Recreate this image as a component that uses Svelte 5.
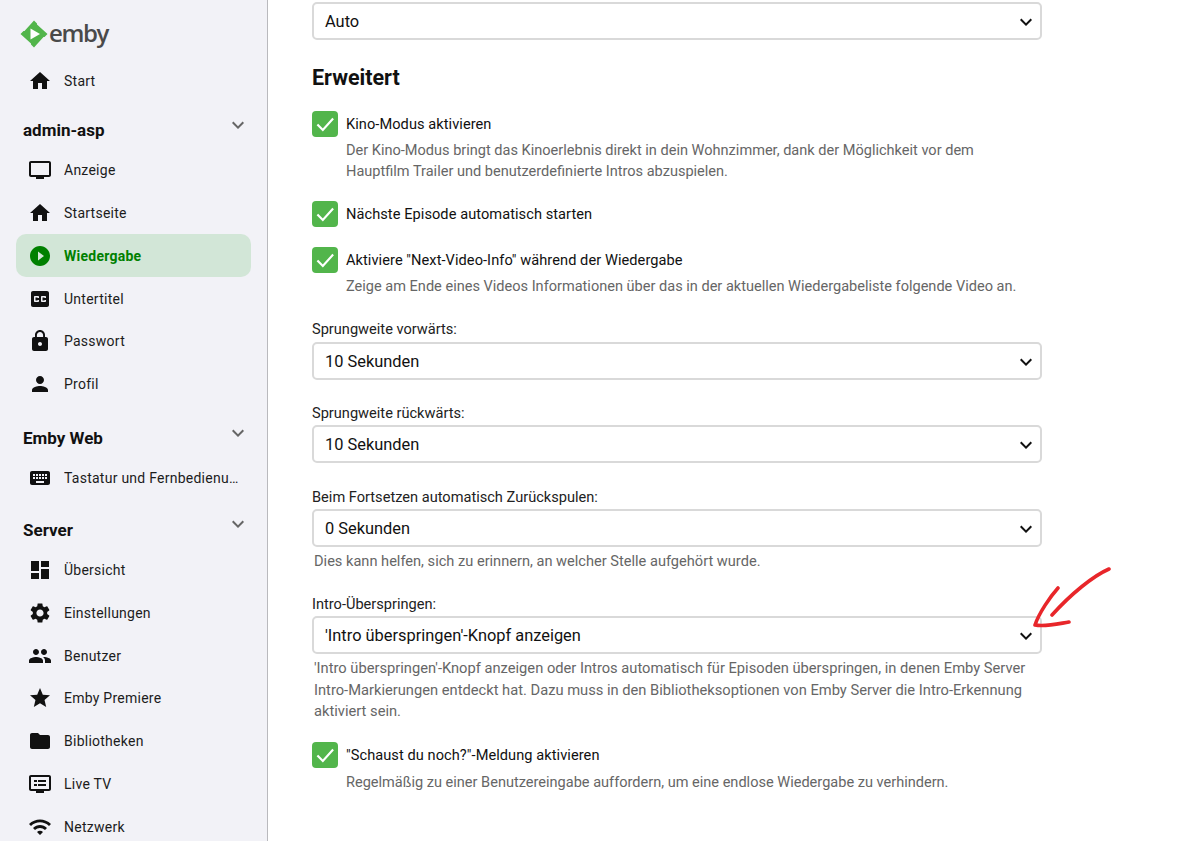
<script>
  const home = "M10 20v-6h4v6h5v-8h3L12 3 2 12h3v8z";
  const groups = [
    { items: [{ label: "Start", icon: home }] },
    {
      title: "admin-asp",
      items: [
        { label: "Anzeige", icon: "M21 3H3c-1.1 0-2 .9-2 2v12c0 1.1.9 2 2 2h5v2h8v-2h5c1.1 0 2-.9 2-2V5c0-1.1-.9-2-2-2zm0 14H3V5h18v12z" },
        { label: "Startseite", icon: home },
        { label: "Wiedergabe", icon: "M12 2C6.48 2 2 6.48 2 12s4.48 10 10 10 10-4.48 10-10S17.52 2 12 2zm-2 14.5v-9l6 4.5-6 4.5z", active: true },
        { label: "Untertitel", icon: "M19 4H5c-1.11 0-2 .9-2 2v12c0 1.1.89 2 2 2h14c1.1 0 2-.9 2-2V6c0-1.1-.9-2-2-2zm-8 7H9.5v-.5h-2v3h2V13H11v1c0 .55-.45 1-1 1H7c-.55 0-1-.45-1-1v-4c0-.55.45-1 1-1h3c.55 0 1 .45 1 1v1zm7 0h-1.500v-.5h-2v3h2V13H18v1c0 .55-.45 1-1 1h-3c-.55 0-1-.45-1-1v-4c0-.55.45-1 1-1h3c.55 0 1 .45 1 1v1z" },
        { label: "Passwort", icon: "M18 8h-1V6c0-2.76-2.24-5-5-5S7 3.240 7 6v2H6c-1.100 0-2 .9-2 2v10c0 1.100.9 2 2 2h12c1.100 0 2-.9 2-2V10c0-1.100-.9-2-2-2zm-6 9c-1.100 0-2-.9-2-2s.9-2 2-2 2 .9 2 2-.9 2-2 2zm3.100-9H8.900V6c0-1.710 1.390-3.100 3.100-3.100 1.710 0 3.100 1.390 3.100 3.100v2z" },
        { label: "Profil", icon: "M12 12c2.210 0 4-1.790 4-4s-1.790-4-4-4-4 1.790-4 4 1.790 4 4 4zm0 2c-2.670 0-8 1.340-8 4v2h16v-2c0-2.660-5.330-4-8-4z" }
      ]
    },
    {
      title: "Emby Web",
      items: [
        { label: "Tastatur und Fernbedienung", icon: "M20 5H4c-1.100 0-1.990.9-1.990 2L2 17c0 1.100.9 2 2 2h16c1.100 0 2-.9 2-2V7c0-1.100-.9-2-2-2zm-9 3h2v2h-2V8zm0 3h2v2h-2v-2zM8 8h2v2H8V8zm0 3h2v2H8v-2zm-1 2H5v-2h2v2zm0-3H5V8h2v2zm9 7H8v-2h8v2zm0-4h-2v-2h2v2zm0-3h-2V8h2v2zm3 3h-2v-2h2v2zm0-3h-2V8h2v2z" }
      ]
    },
    {
      title: "Server",
      items: [
        { label: "Übersicht", icon: "M3 13h8V3H3v10zm0 8h8v-6H3v6zm10 0h8V11h-8v10zm0-18v6h8V3h-8z" },
        { label: "Einstellungen", icon: "M19.140 12.940c.04-.3.06-.61.06-.94 0-.32-.02-.64-.07-.94l2.030-1.580c.18-.14.23-.41.12-.61l-1.920-3.320c-.12-.22-.37-.29-.59-.22l-2.390.96c-.5-.38-1.030-.7-1.620-.94l-.36-2.540c-.04-.24-.24-.41-.48-.41h-3.840c-.24 0-.43.17-.47.41l-.36 2.540c-.59.24-1.130.57-1.620.94l-2.390-.96c-.22-.08-.47 0-.59.22L2.740 8.870c-.12.21-.08.47.12.61l2.030 1.580c-.05.3-.09.63-.09.94s.02.64.07.94l-2.030 1.580c-.18.14-.23.41-.12.61l1.920 3.320c.12.22.37.29.59.22l2.390-.96c.5.38 1.030.7 1.620.94l.36 2.540c.05.24.24.41.48.41h3.840c.24 0 .44-.17.47-.41l.36-2.540c.59-.24 1.130-.56 1.620-.94l2.390.96c.22.08.47 0 .59-.22l1.920-3.320c.12-.22.07-.47-.12-.61l-2.010-1.580zM12 15.600c-1.980 0-3.600-1.620-3.600-3.600s1.620-3.600 3.600-3.600 3.600 1.620 3.600 3.600-1.620 3.600-3.600 3.600z" },
        { label: "Benutzer", icon: "M16 11c1.660 0 2.990-1.340 2.990-3S17.660 5 16 5c-1.660 0-3 1.340-3 3s1.340 3 3 3zm-8 0c1.660 0 2.990-1.340 2.990-3S9.660 5 8 5C6.340 5 5 6.340 5 8s1.340 3 3 3zm0 2c-2.330 0-7 1.170-7 3.500V19h14v-2.500c0-2.330-4.670-3.500-7-3.500zm8 0c-.29 0-.62.02-.97.05 1.160.84 1.970 1.970 1.970 3.450V19h6v-2.500c0-2.330-4.670-3.500-7-3.500z" },
        { label: "Emby Premiere", icon: "M12 17.270 18.180 21l-1.640-7.030L22 9.240l-7.190-.61L12 2 9.190 8.630 2 9.240l5.460 4.730L5.820 21z" },
        { label: "Bibliotheken", icon: "M10 4H4c-1.100 0-1.990.9-1.990 2L2 18c0 1.100.9 2 2 2h16c1.100 0 2-.9 2-2V8c0-1.100-.9-2-2-2h-8l-2-2z" },
        { label: "Live TV", icon: "M21 3H3c-1.100 0-2 .9-2 2v12c0 1.100.9 2 2 2h5v2h8v-2h5c1.100 0 2-.9 2-2V5c0-1.100-.9-2-2-2zm0 14H3V5h18v12zM9 8H6v2h3V8zm9 0h-8v2h8V8zM9 12H6v2h3v-2zm9 0h-8v2h8v-2z" },
        { label: "Netzwerk", icon: "M1 9l2 2c4.970-4.970 13.030-4.970 18 0l2-2C16.930 2.930 7.080 2.930 1 9zm8 8l3 3 3-3c-1.650-1.660-4.340-1.660-6 0zm-4-4l2 2c2.760-2.760 7.240-2.760 10 0l2-2C15.140 9.140 8.870 9.140 5 13z" }
      ]
    }
  ];
</script>

{#snippet chevron()}
  <svg class="chev" viewBox="0 0 24 24"><path d="M7.410 8.590 12 13.170l4.590-4.580L18 10l-6 6-6-6z" /></svg>
{/snippet}

{#snippet select(value)}
  <div class="select">
    <span>{value}</span>
    {@render chevron()}
  </div>
{/snippet}

{#snippet check(label)}
  <div class="check">
    <span class="box">
      <svg viewBox="0 0 24 24"><path d="M5 12.500l5 5L19.500 7" /></svg>
    </span>
    <span class="check-label">{label}</span>
  </div>
{/snippet}

<div class="page">
  <aside class="sidebar">
    <div class="logo">
      <svg viewBox="0 0 28 28" width="28" height="28">
        <path fill="#52b54b" d="M14 0.500 17 3.500 17 4.500 27.500 14 24.500 17 23.500 17 14 27.500 11 24.500 11 23.500 0.500 14 3.500 11 4.500 11z" />
        <path fill="#fff" d="M10.500 8.500 20 14 10.500 19.500z" />
      </svg>
      <span>emby</span>
    </div>

    {#each groups as group}
      <section class="group">
        {#if group.title}
          <div class="group-title">
            <h3>{group.title}</h3>
            <svg class="group-chev" viewBox="0 0 24 24"><path d="M7.410 8.590 12 13.170l4.590-4.580L18 10l-6 6-6-6z" /></svg>
          </div>
        {/if}
        {#each group.items as item}
          <div class="nav-item" class:active={item.active}>
            <svg viewBox="0 0 24 24"><path d={item.icon} /></svg>
            <span>{item.label}</span>
          </div>
        {/each}
      </section>
    {/each}
  </aside>

  <main class="content">
    {@render select("Auto")}
    <h2>Erweitert</h2>

    {@render check("Kino-Modus aktivieren")}
    <p class="desc kino">Der Kino-Modus bringt das Kinoerlebnis direkt in dein Wohnzimmer, dank der Möglichkeit vor dem<br />Hauptfilm Trailer und benutzerdefinierte Intros abzuspielen.</p>

    <div class="gap-1">{@render check("Nächste Episode automatisch starten")}</div>

    <div class="gap-2">{@render check('Aktiviere "Next-Video-Info" während der Wiedergabe')}</div>
    <p class="desc">Zeige am Ende eines Videos Informationen über das in der aktuellen Wiedergabeliste folgende Video an.</p>

    <div class="field first">
      <label>Sprungweite vorwärts:</label>
      {@render select("10 Sekunden")}
    </div>
    <div class="field second">
      <label>Sprungweite rückwärts:</label>
      {@render select("10 Sekunden")}
    </div>
    <div class="field third">
      <label>Beim Fortsetzen automatisch Zurückspulen:</label>
      {@render select("0 Sekunden")}
      <p class="hint">Dies kann helfen, sich zu erinnern, an welcher Stelle aufgehört wurde.</p>
    </div>
    <div class="field wide">
      <label>Intro-Überspringen:</label>
      {@render select("'Intro überspringen'-Knopf anzeigen")}
      <p class="hint long">'Intro überspringen'-Knopf anzeigen oder Intros automatisch für Episoden überspringen, in denen Emby Server<br />Intro-Markierungen entdeckt hat. Dazu muss in den Bibliotheksoptionen von Emby Server die Intro-Erkennung<br />aktiviert sein.</p>
    </div>

    <div class="gap-3">{@render check('"Schaust du noch?"-Meldung aktivieren')}</div>
    <p class="desc">Regelmäßig zu einer Benutzereingabe auffordern, um eine endlose Wiedergabe zu verhindern.</p>
  </main>

  <svg class="arrow" viewBox="0 0 90 70" width="90" height="70">
    <path d="M78 2C62 9 40 27 21 48M27 21C19 30 8 46 4 58C14 60 26 57 38 55" />
  </svg>
</div>

<style>
  :global(body) {
    margin: 0;
    background: #fff;
    overflow: hidden;
  }
  .page {
    position: relative;
    display: flex;
    height: 841px;
    overflow: hidden;
    font-family: Roboto, "Liberation Sans", sans-serif;
    font-size: 14.6px;
    color: #111;
  }
  .sidebar {
    width: 268px;
    flex: none;
    box-sizing: border-box;
    height: 841px;
    overflow: hidden;
    background: #f2f2f7;
    border-right: 1px solid #b9b9bd;
    padding-top: 20px;
  }
  .logo {
    display: flex;
    align-items: center;
    gap: 1px;
    height: 28px;
    padding-left: 20px;
  }
  .logo span {
    font-family: "Open Sans", sans-serif;
    font-size: 24px;
    font-weight: 600;
    letter-spacing: -1.4px;
    color: #4a4a4a;
    line-height: 28px;
    margin-top: -2px;
  }
  .group {
    margin-top: 14px;
  }
  .group:first-of-type {
    margin-top: 12px;
    margin-bottom: -5px;
  }
  .group-title {
    position: relative;
    height: 37px;
    padding-left: 23px;
    display: flex;
    align-items: center;
  }
  .group:nth-of-type(3) {
    margin-top: 14.7px;
  }
  .group:nth-of-type(3) .group-title {
    height: 36.2px;
  }
  .group:nth-of-type(4) {
    margin-top: 11.4px;
  }
  .group:nth-of-type(4) .group-title {
    height: 38px;
  }
  h3 {
    margin: 0;
    font-size: 17px;
    font-weight: 700;
    color: #111;
  }
  .group-chev {
    position: absolute;
    right: 17px;
    top: 1px;
    width: 24px;
    height: 24px;
    fill: #666;
  }
  .nav-item {
    display: flex;
    align-items: center;
    gap: 12px;
    height: 42.8px;
    margin: 0 16px;
    padding-left: 12px;
    border-radius: 10px;
    font-size: 14px;
    letter-spacing: 0.25px;
    color: #1c1c1c;
    white-space: nowrap;
  }
  .nav-item svg {
    width: 24px;
    height: 24px;
    flex: none;
    fill: #111;
  }
  .nav-item span {
    overflow: hidden;
    text-overflow: ellipsis;
    width: 176px;
  }
  .nav-item.active {
    background: #d2e6d7;
    color: #008000;
    font-weight: 700;
  }
  .nav-item.active svg {
    fill: #008000;
  }
  .content {
    width: 730px;
    margin-left: 44px;
    padding-top: 2px;
  }
  .select {
    box-sizing: border-box;
    display: flex;
    align-items: center;
    justify-content: space-between;
    height: 38px;
    padding: 0 2px 0 11px;
    border: 2px solid #d9d9d9;
    border-radius: 5px;
    font-size: 16.4px;
    color: #111;
  }
  .chev {
    width: 24px;
    height: 24px;
    fill: #111;
    margin-top: 2px;
  }
  h2 {
    margin: 25px 0 19px;
    font-size: 21.5px;
    line-height: 26px;
    font-weight: 700;
    color: #111;
  }
  .check {
    display: flex;
    align-items: center;
    gap: 8px;
    height: 27px;
  }
  .box {
    width: 26px;
    height: 26px;
    flex: none;
    background: #52b54b;
    border-radius: 4px;
    display: flex;
  }
  .box svg {
    width: 26px;
    height: 26px;
    fill: none;
    stroke: #fff;
    stroke-width: 2;
  }
  .check-label {
    letter-spacing: 0.06px;
    color: #111;
  }
  .desc {
    margin: 3px 0 0 34px;
    font-size: 14.55px;
    line-height: 21px;
    color: #666;
  }
  .hint {
    margin: 4px 0 0 2px;
    line-height: 21px;
    color: #666;
  }
  .hint.long {
    margin-top: 4.3px;
    font-size: 14.7px;
    line-height: 21.4px;
  }
  .gap-1 {
    margin-top: 18px;
  }
  .gap-2 {
    margin-top: 19px;
  }
  .gap-3 {
    margin-top: 19px;
  }
  .field {
    margin-top: 22px;
  }
  .field.second {
    margin-top: 23px;
  }
  .field.third {
    margin-top: 24px;
  }
  label {
    display: block;
    line-height: 21px;
    margin-bottom: 1px;
    color: #222;
  }
  .field.first label {
    margin-bottom: 2px;
  }
  .arrow {
    position: absolute;
    left: 1031px;
    top: 567px;
    fill: none;
    stroke: #e8262a;
    stroke-width: 3.6;
    stroke-linecap: round;
    stroke-linejoin: round;
  }
</style>
